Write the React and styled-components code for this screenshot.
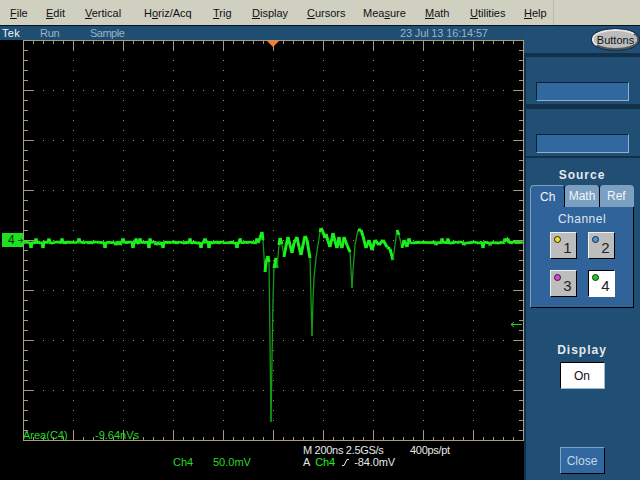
import React from 'react';
import styled, { createGlobalStyle, css } from 'styled-components';

const GlobalStyle = createGlobalStyle`
    html, body {
        margin: 0;
        padding: 0;
        background: #000;
    }
    body {
        font-family: "Liberation Sans", Arial, sans-serif;
    }
`

const BLUE_DITHER = 'repeating-conic-gradient(#1d4a6d 0 25%, #23527a 0 50%) 0 0 / 2px 2px'

const Screen = styled.div`
    width: 640px;
    height: 480px;
    overflow: hidden;
    display: flex;
    flex-direction: column;
    background: #000;
`
const MenuBar = styled.div`
    height: 25px;
    flex: none;
    display: flex;
    align-items: center;
    background: #d0d0c1;
    border-bottom: 1px solid #06121c;
    font-size: 11px;
    color: #111;
`
const MenuItem = styled.div`
    width: ${p => p.$w}px;
    flex: none;
    box-sizing: border-box;
    padding-left: 10px;
    white-space: nowrap;
`
const MenuEnd = styled.div`
    flex: 1;
    align-self: stretch;
    border-left: 1px solid #b9b9aa;
`
const Body = styled.div`
    flex: 1;
    display: flex;
    min-height: 0;
`
const LeftCol = styled.div`
    width: 524px;
    flex: none;
    display: flex;
    flex-direction: column;
`
const StatusBar = styled.div`
    height: 14px;
    flex: none;
    display: flex;
    align-items: center;
    background: #1f4e72;
    font-size: 11px;
`
const StatusText = styled.div`
    width: ${p => p.$w}px;
    flex: none;
    letter-spacing: ${p => p.$spacing || 0}px;
    color: ${p => p.$bright ? '#f2f5f8' : '#9db2c6'};
    padding-left: ${p => p.$pad || 0}px;
    box-sizing: border-box;
    white-space: nowrap;
`
const Scope = styled.div`
    position: relative;
    height: 401px;
    flex: none;
    padding-left: 23px;
`
const ScopeSvg = styled.svg`
    display: block;
`
const ChannelMarker = styled.div`
    position: absolute;
    left: 2px;
    top: 193px;
    width: 21px;
    height: 14px;
    display: flex;
    align-items: center;
    gap: 3px;
    padding-left: 6px;
    box-sizing: border-box;
    background: #1fe01f;
    color: #06300a;
    font-size: 12px;
`
const MeasureReadout = styled.div`
    position: absolute;
    left: 23px;
    bottom: 0;
    display: flex;
    font-size: 11px;
    line-height: 12px;
    color: #26d826;
`
const MeasureLabel = styled.span`
    width: 72px;
`
const Readouts = styled.div`
    flex: 1;
    display: grid;
    grid-template-columns: 173px 40px 90px 1fr;
    grid-template-rows: 12px 11px;
    padding-top: 4px;
    font-size: 11px;
    line-height: 11px;
    color: #e4e8e4;
`
const Timebase = styled.div`
    grid-column: 3 / 5;
    grid-row: 1;
    display: flex;
    margin-left: 90px;
    letter-spacing: -0.3px;
    white-space: nowrap;
`
const TimeRate = styled.span`
    width: 107px;
`
const ScaleCell = styled.div`
    grid-row: 2;
    grid-column: ${p => p.$col};
    color: #26d826;
    white-space: nowrap;
`
const TriggerCell = styled.div`
    grid-row: 2;
    grid-column: 3 / 5;
    margin-left: 90px;
    display: flex;
    align-items: center;
    letter-spacing: -0.1px;
    white-space: nowrap;
`
const TriggerSource = styled.span`
    color: #1ff01f;
    margin: 0 7px 0 5px;
`
const SlopeIcon = styled.svg`
    margin-right: 5px;
`
const SidePanel = styled.div`
    flex: 1;
    display: flex;
    flex-direction: column;
    background: #12304a;
`
const TopSection = styled.div`
    height: 27px;
    flex: none;
    display: flex;
    justify-content: flex-end;
    align-items: flex-start;
    padding: 3px 1px 0 0;
    box-sizing: border-box;
    background: ${BLUE_DITHER};
`
const PillButton = styled.div`
    width: 47px;
    height: 21px;
    box-sizing: border-box;
    display: flex;
    align-items: center;
    justify-content: center;
    border-radius: 50% / 45%;
    background: #bcbcbc;
    border: 2px solid #e6e6e6;
    border-right-color: #555;
    border-bottom-color: #555;
    outline: 1px solid #12304a;
    font-size: 11px;
    color: #111;
`
const Band = styled.div`
    height: ${p => p.$h}px;
    flex: none;
`
const Section = styled.div`
    height: ${p => p.$h}px;
    flex: none;
    margin-left: 2px;
    box-sizing: border-box;
    padding: 25px 0 0 10px;
    background: ${BLUE_DITHER};
`
const BlankField = styled.div`
    width: 93px;
    height: 19px;
    box-sizing: border-box;
    background: #30689f;
    border: 1px solid #8fb0cc;
    border-top-color: #0c2236;
    border-left-color: #0c2236;
`
const ControlPanel = styled.div`
    flex: 1;
    margin-left: 2px;
    display: flex;
    flex-direction: column;
    align-items: center;
    padding-top: 10px;
    padding-right: 2px;
    background: ${BLUE_DITHER};
`
const Heading = styled.div`
    font-size: 12px;
    line-height: 14px;
    font-weight: bold;
    letter-spacing: 1px;
    color: #e6e9ec;
`
const TabRow = styled.div`
    display: flex;
    margin-top: 3px;
    width: 104px;
    height: 22px;
`
const Tab = styled.div`
    flex: 1;
    display: flex;
    align-items: center;
    justify-content: center;
    font-size: 12px;
    color: #f2f5f8;
    border-radius: 4px 4px 0 0;
    background: ${p => p.$active ? '#2f6399' : '#7ba0c2'};
    border-right: 1px solid ${p => p.$last ? '#7ba0c2' : '#000'};
    ${p => p.$active && css`
        border-top: 1px solid #7ba0c2;
        border-left: 1px solid #7ba0c2;
    `}
`
const TabBody = styled.div`
    width: 104px;
    height: 101px;
    box-sizing: border-box;
    background: #2f6399;
    border-left: 1px solid #7ba0c2;
    border-right: 1px solid #000;
    border-bottom: 1px solid #000;
    display: flex;
    flex-direction: column;
    align-items: center;
    padding-top: 5px;
`
const ChannelLabel = styled.div`
    font-size: 12px;
    line-height: 14px;
    letter-spacing: 0.5px;
    color: #dfe6ee;
`
const ChannelGrid = styled.div`
    display: grid;
    grid-template-columns: 27px 27px;
    grid-auto-rows: 27px;
    column-gap: 11px;
    row-gap: 11px;
    margin-top: 6px;
`
const ChannelButton = styled.div`
    box-sizing: border-box;
    display: flex;
    align-items: flex-end;
    justify-content: flex-end;
    padding: 0 4px 2px 0;
    position: relative;
    font-size: 15px;
    line-height: 16px;
    color: #222;
    background: ${p => p.$on ? '#fff' : '#bdbdbd'};
    border: 1px solid ${p => p.$on ? '#fff' : '#000'};
    border-top-color: ${p => p.$on ? '#000' : '#f2f2f2'};
    border-left-color: ${p => p.$on ? '#000' : '#f2f2f2'};
`
const ChannelDot = styled.span`
    position: absolute;
    left: 3px;
    top: 3px;
    width: 7px;
    height: 7px;
    box-sizing: border-box;
    border-radius: 50%;
    border: 1px solid #222;
    background: ${p => p.$color};
`
const DisplayBlock = styled.div`
    margin-top: 35px;
    display: flex;
    flex-direction: column;
    align-items: center;
`
const ToggleButton = styled.div`
    width: 45px;
    height: 27px;
    margin-top: 5px;
    box-sizing: border-box;
    display: flex;
    align-items: center;
    justify-content: center;
    background: #fff;
    border: 1px solid #9db9d2;
    border-top-color: #000;
    border-left-color: #000;
    font-size: 12px;
    color: #111;
`
const CloseButton = styled.div`
    width: 45px;
    height: 27px;
    margin-top: 58px;
    box-sizing: border-box;
    display: flex;
    align-items: center;
    justify-content: center;
    background: #30689f;
    border: 1px solid #000;
    border-top-color: #7fa3c4;
    border-left-color: #7fa3c4;
    font-size: 12px;
    color: #c9d6e2;
`

const MENUS = [
    { pre: '', key: 'F', post: 'ile', w: 36 },
    { pre: '', key: 'E', post: 'dit', w: 39 },
    { pre: '', key: 'V', post: 'ertical', w: 59 },
    { pre: 'H', key: 'o', post: 'riz/Acq', w: 69 },
    { pre: '', key: 'T', post: 'rig', w: 39 },
    { pre: '', key: 'D', post: 'isplay', w: 55 },
    { pre: '', key: 'C', post: 'ursors', w: 56 },
    { pre: 'Mea', key: 's', post: 'ure', w: 62 },
    { pre: '', key: 'M', post: 'ath', w: 45 },
    { pre: '', key: 'U', post: 'tilities', w: 54 },
    { pre: '', key: 'H', post: 'elp', w: 39 },
]

const CHANNELS = [
    { n: 1, color: '#f0e020' },
    { n: 2, color: '#3a9be8' },
    { n: 3, color: '#e040d8' },
    { n: 4, color: '#18d018', on: true },
]

// hand read off the capture, page coordinates
const BURST = [
    [258,243],[260,238],[262,232],[263,240],[265,272],[266,262],[268,256],[269,262],[271,422],[272,360],
    [273,300],[274,268],[276,258],[277,268],[279,245],[280,238],[282,244],[284,257],[286,246],[288,237],
    [290,245],[292,253],[294,243],[297,237],[299,247],[301,255],[303,245],[305,236],[307,240],[309,252],
    [310,258],[311,300],[312,336],[313,300],[314,278],[316,258],[318,245],[320,232],[321,228],[323,232],
    [325,238],[326,234],[328,241],[330,247],[332,238],[333,233],[335,241],[337,248],[339,237],[340,243],
    [342,248],[344,237],[347,245],[350,252],[351,270],[352,288],[353,270],[355,245],[358,230],[361,230],
    [363,236],[366,248],[369,240],[372,250],[375,240],[379,245],[383,240],[387,247],[390,249],[393,260],
    [395,245],[397,230],[399,235],[402,248],[404,240],[407,247],
]

const noisy = (from, to) => {
    const pts = []
    let seed = from * 7 + 13
    for (let x = from; x <= to; x += 1) {
        seed = (seed * 1103 + 12345) % 65536
        const r = seed / 65536
        const kick = r > 0.94 ? 4 : r < 0.06 ? -4 : 0
        pts.push([x, 242.5 + (x % 2 ? 1 : -1) * r * 1.6 + kick])
    }
    return pts
}

const TRACE = [...noisy(23, 257), ...BURST, ...noisy(408, 522)]

const dotsPath = () => {
    let d = ''
    for (let x = 73; x < 523; x += 50) {
        for (let y = 50; y < 440; y += 10) d += `M${x} ${y}h1v1h-1z`
    }
    for (let y = 90; y < 440; y += 50) {
        for (let x = 33; x < 523; x += 10) d += `M${x} ${y}h1v1h-1z`
    }
    return d
}

const ticksPath = () => {
    let d = ''
    for (let x = 33; x < 523; x += 10) {
        const major = (x - 23) % 50 === 0
        d += `M${x + 0.5} 41v${major ? 9 : 3}M${x + 0.5} 440v-${major ? 9 : 3}`
    }
    for (let y = 50; y < 440; y += 10) {
        const major = (y - 40) % 50 === 0
        d += `M24 ${y + 0.5}h${major ? 9 : 4}M523 ${y + 0.5}h-${major ? 9 : 4}`
    }
    return d
}

const Graticule = () => (
    <ScopeSvg width="501" height="401" viewBox="23 40 501 401">
        <path d={dotsPath()} fill="#9a8f72" />
        <path d={ticksPath()} stroke="#a59a7c" strokeWidth="1" fill="none" />
        <rect x="23.5" y="40.5" width="500" height="400" fill="none" stroke="#a89d80" />
        {TRACE.slice(1).map((p, i) => {
            const prev = TRACE[i]
            const steep = Math.abs(p[1] - prev[1]) > 12
            return (
                <line
                    key={i}
                    x1={prev[0]}
                    y1={prev[1]}
                    x2={p[0]}
                    y2={p[1]}
                    stroke={steep ? '#149a14' : '#1cf01c'}
                    strokeWidth={steep ? 1.3 : 3}
                />
            )
        })}
        <path d="M267 41h12l-6 6z" fill="#ff7a2a" />
        <path d="M511 324.5h11M511 324.5l3-2.5M511 324.5l3 2.5" stroke="#22d322" fill="none" />
    </ScopeSvg>
)

export default function App() {
    return (
        <Screen>
            <GlobalStyle />
            <MenuBar>
                {MENUS.map(m => (
                    <MenuItem key={m.pre + m.key} $w={m.w}>
                        {m.pre}<u>{m.key}</u>{m.post}
                    </MenuItem>
                ))}
                <MenuEnd />
            </MenuBar>
            <Body>
                <LeftCol>
                    <StatusBar>
                        <StatusText $w={40} $pad={2} $spacing={0.3} $bright>Tek</StatusText>
                        <StatusText $w={50} $spacing={-0.3}>Run</StatusText>
                        <StatusText $w={310} $spacing={-0.5}>Sample</StatusText>
                        <StatusText $w={120} $spacing={-0.15}>23 Jul 13 16:14:57</StatusText>
                    </StatusBar>
                    <Scope>
                        <Graticule />
                        <ChannelMarker>
                            4
                            <svg width="7" height="7" viewBox="0 0 7 7">
                                <path d="M0 3.5h6M3.5 1l3 2.5-3 2.5" stroke="#06300a" fill="none" />
                            </svg>
                        </ChannelMarker>
                        <MeasureReadout>
                            <MeasureLabel>Area(C4)</MeasureLabel>
                            <span>-9.64nVs</span>
                        </MeasureReadout>
                    </Scope>
                    <Readouts>
                        <Timebase>
                            <TimeRate>M 200ns 2.5GS/s</TimeRate>
                            <span>400ps/pt</span>
                        </Timebase>
                        <ScaleCell $col={2}>Ch4</ScaleCell>
                        <ScaleCell $col={3}>50.0mV</ScaleCell>
                        <TriggerCell>
                            A
                            <TriggerSource>Ch4</TriggerSource>
                            <SlopeIcon width="7" height="7" viewBox="0 0 7 7">
                                <path d="M0 6.5h2l3-6h2" stroke="#e4e8e4" fill="none" />
                            </SlopeIcon>
                            -84.0mV
                        </TriggerCell>
                    </Readouts>
                </LeftCol>
                <SidePanel>
                    <TopSection>
                        <PillButton>Buttons</PillButton>
                    </TopSection>
                    <Band $h={4} />
                    <Section $h={47}><BlankField /></Section>
                    <Band $h={5} />
                    <Section $h={47}><BlankField /></Section>
                    <Band $h={2} />
                    <ControlPanel>
                        <Heading>Source</Heading>
                        <TabRow>
                            <Tab $active>Ch</Tab>
                            <Tab>Math</Tab>
                            <Tab $last>Ref</Tab>
                        </TabRow>
                        <TabBody>
                            <ChannelLabel>Channel</ChannelLabel>
                            <ChannelGrid>
                                {CHANNELS.map(c => (
                                    <ChannelButton key={c.n} $on={c.on}>
                                        <ChannelDot $color={c.color} />
                                        {c.n}
                                    </ChannelButton>
                                ))}
                            </ChannelGrid>
                        </TabBody>
                        <DisplayBlock>
                            <Heading>Display</Heading>
                            <ToggleButton>On</ToggleButton>
                        </DisplayBlock>
                        <CloseButton>Close</CloseButton>
                    </ControlPanel>
                </SidePanel>
            </Body>
        </Screen>
    )
}
